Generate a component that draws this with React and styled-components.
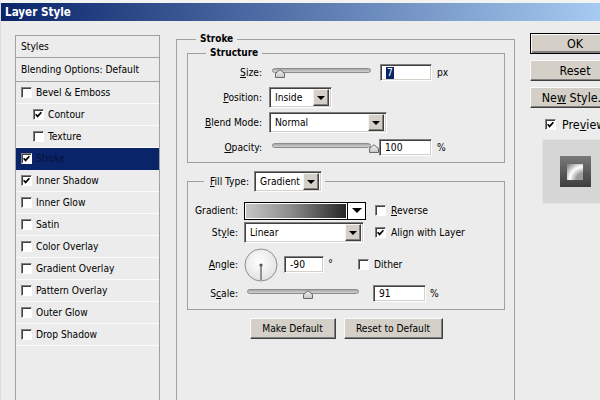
import React from "react";
import styled, { createGlobalStyle, css } from "styled-components";

const FONT = `"DejaVu Sans Condensed", "Liberation Sans", Arial, sans-serif`;

const Global = createGlobalStyle`
  html, body { margin: 0; padding: 0; background: #ececec; }
  body { font-family: ${FONT}; font-size: 10.2px; color: #000; }
  #root { width: 600px; height: 400px; overflow: hidden; }
`;

const Window = styled.div`
  width: 600px;
  height: 400px;
  overflow: hidden;
  box-sizing: border-box;
  background: #ececec;
  border-top: 3px solid #f3f3f3;
  border-left: 1px solid #dcdcdc;
  display: flex;
  flex-direction: column;
  font-family: ${FONT};
  font-size: 10.2px;
  color: #000;
`;

const TitleBar = styled.div`
  flex: none;
  height: 18px;
  display: flex;
  align-items: center;
  padding-left: 4px;
  background: linear-gradient(90deg, #0a246a 0%, #a6caf0 100%);
  color: #fff;
  font-weight: bold;
  font-size: 11.6px;
`;

const Body = styled.div`
  flex: 1;
  min-height: 0;
  display: flex;
  align-items: flex-start;
`;

/* ---------- left style list ---------- */
const StyleList = styled.div`
  flex: none;
  margin: 14px 0 0 14px;
  width: 145px;
  height: 400px;
  box-sizing: border-box;
  border: 1px solid #a0a0a0;
  display: flex;
  flex-direction: column;
`;

const ListHead = styled.div`
  height: ${(p) => p.$h}px;
  border-bottom: 1px solid #a0a0a0;
  display: flex;
  align-items: center;
  padding-left: 5px;
`;

const ListItem = styled.div`
  height: 21px;
  border-bottom: 1px solid ${(p) => (p.$selected ? "#0a246a" : "#fbfbfb")};
  display: flex;
  align-items: center;
  gap: 4px;
  padding-left: ${(p) => (p.$indent ? 17 : 5)}px;
  background: ${(p) => (p.$selected ? "#0a246a" : "transparent")};
  color: ${(p) => (p.$selected ? "#06103a" : "#000")};
`;

/* ---------- checkbox ---------- */
const Box = styled.span`
  flex: none;
  width: 11px;
  height: 11px;
  box-sizing: border-box;
  background: #fff;
  border: 1px solid;
  border-color: #808080 #fff #fff #808080;
  box-shadow: inset 1px 1px #404040;
  display: flex;
  align-items: center;
  justify-content: center;
`;

const CheckBox = ({ checked }) => (
  <Box>
    {checked && (
      <svg width="7" height="7" viewBox="0 0 7 7">
        <polyline points="0.6,3.2 2.6,5.4 6.4,1.2" fill="none" stroke="#000" strokeWidth="1.7" />
      </svg>
    )}
  </Box>
);

const CheckOption = styled.label`
  flex: none;
  display: flex;
  align-items: center;
  gap: 5px;
  margin-left: ${(p) => p.$ml || 0}px;
`;

const Mn = styled.span`
  text-decoration: underline;
  text-underline-offset: 1px;
`;

/* ---------- main group boxes ---------- */
const StrokeGroup = styled.fieldset`
  flex: none;
  margin: 11px 0 0 16px;
  padding: 0 9px 0 10px;
  width: 339px;
  height: 430px;
  box-sizing: border-box;
  border: 1px solid #a0a0a0;
  min-width: 0;
`;

const Group = styled.fieldset`
  margin: ${(p) => p.$mt || 0}px 0 0 0;
  padding: ${(p) => p.$pt}px 0 ${(p) => p.$pb}px 0;
  border: 1px solid #a0a0a0;
  min-width: 0;
  display: flex;
  flex-direction: column;
`;

const Legend = styled.legend`
  margin-left: ${(p) => p.$offset}px;
  padding: 0 4px;
  height: 14px;
  line-height: 14px;
  font-weight: bold;
  font-size: 10px;
`;

const ControlLegend = styled.legend`
  margin-left: 16px;
  padding: 0 3px 0 6px;
  height: 21px;
  display: flex;
  align-items: center;
  gap: 5px;
`;

const FormRow = styled.div`
  display: flex;
  align-items: center;
  height: ${(p) => p.$h || 21}px;
  margin-top: ${(p) => p.$mt || 0}px;
`;

const FieldLabel = styled.span`
  flex: none;
  width: ${(p) => p.$w}px;
  margin-right: ${(p) => p.$gap}px;
  text-align: right;
  white-space: nowrap;
`;

const Unit = styled.span`
  flex: none;
  margin-left: ${(p) => p.$ml || 5}px;
`;

const Degree = styled.span`
  flex: none;
  margin: 0 0 3px 4px;
  font-size: 11px;
  line-height: 11px;
`;

/* ---------- inputs ---------- */
const sunken = css`
  box-sizing: border-box;
  background: #fff;
  border: 1px solid;
  border-color: #808080 #fff #fff #808080;
  box-shadow: inset 1px 1px #404040, inset -1px -1px #d4d0c8;
`;

const TextInput = styled.div`
  ${sunken};
  flex: none;
  width: ${(p) => p.$w}px;
  height: 17px;
  margin-left: ${(p) => p.$ml || 0}px;
  padding-left: 5px;
  display: flex;
  align-items: center;
`;

const Highlight = styled.span`
  background: #0a246a;
  color: #fff;
  padding: 0 1px;
  line-height: 12px;
`;

const Select = styled.div`
  ${sunken};
  flex: none;
  width: ${(p) => p.$w}px;
  height: 21px;
  padding: 2px 2px 2px 5px;
  display: flex;
  align-items: center;
`;

const DropButton = styled.span`
  margin-left: auto;
  width: 16px;
  height: 17px;
  box-sizing: border-box;
  background: #d4d0c8;
  border: 1px solid;
  border-color: #f4f4f4 #404040 #404040 #f4f4f4;
  box-shadow: inset -1px -1px #808080;
  display: flex;
  align-items: center;
  justify-content: center;
  &::after {
    content: "";
    border-left: 4px solid transparent;
    border-right: 4px solid transparent;
    border-top: 4px solid #000;
  }
`;

const GradientPicker = styled.div`
  flex: none;
  width: 122px;
  height: 18px;
  box-sizing: border-box;
  border: 1px solid #000;
  background: #fff;
  display: flex;
`;

const GradientSwatch = styled.div`
  flex: 1;
  margin: 1px;
  background: linear-gradient(90deg, #c6c6c6 0%, #8c8c8c 45%, #262626 100%);
`;

const GradientArrow = styled.span`
  width: 17px;
  border-left: 1px solid #000;
  display: flex;
  align-items: center;
  justify-content: center;
  &::after {
    content: "";
    border-left: 5px solid transparent;
    border-right: 5px solid transparent;
    border-top: 5px solid #000;
  }
`;

/* ---------- slider ---------- */
const SliderBox = styled.div`
  flex: none;
  position: relative;
  width: ${(p) => p.$w}px;
  height: 21px;
  box-sizing: border-box;
  padding: 6px 3px 0;
`;

const SliderTrack = styled.div`
  height: 5px;
  box-sizing: border-box;
  border-radius: 3px;
  border: 1px solid #8c8c8c;
  background: linear-gradient(#a8a8a8, #d0d0d0);
`;

const Thumb = styled.svg`
  position: absolute;
  top: 7px;
`;

const Slider = ({ w, pos }) => {
  const left = 3 + pos * (w - 9);
  return (
    <SliderBox $w={w}>
      <SliderTrack />
      <Thumb width="12" height="9" viewBox="0 0 12 9" style={{ left }}>
        <defs>
          <linearGradient id="tg" x1="0" y1="0" x2="0" y2="1">
            <stop offset="0" stopColor="#f4f4f4" />
            <stop offset="1" stopColor="#c4c4c4" />
          </linearGradient>
        </defs>
        <path d="M1.5 8.5 L1.5 5 Q1.5 4 3 3.2 L6 0.8 L9 3.2 Q10.5 4 10.5 5 L10.5 8.5 Z" fill="url(#tg)" stroke="#6a6a6a" strokeWidth="1" />
      </Thumb>
    </SliderBox>
  );
};

const Dial = () => (
  <svg width="34" height="34" viewBox="0 0 34 34" style={{ flex: "none" }}>
    <defs>
      <radialGradient id="dg" cx="0.45" cy="0.4" r="0.6">
        <stop offset="0" stopColor="#ffffff" />
        <stop offset="1" stopColor="#e2e2e2" />
      </radialGradient>
    </defs>
    <circle cx="17" cy="17" r="16" fill="url(#dg)" stroke="#8e8e8e" strokeWidth="1" />
    <line x1="17" y1="17" x2="17" y2="32" stroke="#7a7a7a" strokeWidth="1.6" />
    <circle cx="17" cy="17" r="1.6" fill="#555" />
  </svg>
);

/* ---------- buttons ---------- */
const Button = styled.button`
  flex: none;
  width: ${(p) => p.$w}px;
  height: 21px;
  padding: 0;
  margin: 0;
  font-family: ${FONT};
  font-size: ${(p) => p.$fs || 10.2}px;
  color: #000;
  background: #d4d0c8;
  border: 1px solid;
  border-color: #fafafa #404040 #404040 #fafafa;
  box-shadow: inset -1px -1px #808080;
  white-space: nowrap;
  overflow: hidden;
  ${(p) =>
    p.$default &&
    css`
      border-color: #000;
      box-shadow: inset 1px 1px #fafafa, inset -2px -2px #808080;
    `}
`;

const ButtonRow = styled.div`
  display: flex;
  justify-content: center;
  gap: 8px;
  margin-top: 8px;
`;

/* ---------- right column ---------- */
const SideColumn = styled.div`
  flex: none;
  margin: 12px 0 0 15px;
  width: 90px;
  display: flex;
  flex-direction: column;
  gap: 6px;
  font-size: 12.4px;
`;

const PreviewToggle = styled(CheckOption)`
  margin: 4px 0 0 15px;
  gap: 6px;
  height: 12px;
`;

const PreviewBox = styled.div`
  margin: 3px 0 0 12px;
  width: 66px;
  height: 65px;
  box-sizing: border-box;
  background: #d6d6d6;
  border: 1px solid #e4e4e4;
  display: flex;
  align-items: center;
  justify-content: center;
`;

const PreviewOuter = styled.div`
  width: 31px;
  height: 31px;
  background: linear-gradient(#7a7a7a, #3c3c3c);
  display: flex;
  align-items: center;
  justify-content: center;
`;

const PreviewInner = styled.div`
  width: 16px;
  height: 16px;
  background: radial-gradient(circle at 100% 100%, #9c9c9c 0 30%, #dcdcdc 48%, #ffffff 58%, #8a8a8a 92%);
`;

const layers = [
  { label: "Bevel & Emboss" },
  { label: "Contour", indent: true, checked: true },
  { label: "Texture", indent: true },
  { label: "Stroke", checked: true, selected: true },
  { label: "Inner Shadow", checked: true },
  { label: "Inner Glow" },
  { label: "Satin" },
  { label: "Color Overlay" },
  { label: "Gradient Overlay" },
  { label: "Pattern Overlay" },
  { label: "Outer Glow" },
  { label: "Drop Shadow" },
];

export default function App() {
  return (
    <>
      <Global />
      <Window>
        <TitleBar>Layer Style</TitleBar>
        <Body>
          <StyleList>
            <ListHead $h={21}>Styles</ListHead>
            <ListHead $h={23}>Blending Options: Default</ListHead>
            {layers.map((l) => (
              <ListItem key={l.label} $indent={l.indent} $selected={l.selected}>
                <CheckBox checked={l.checked} />
                <span>{l.label}</span>
              </ListItem>
            ))}
          </StyleList>

          <StrokeGroup>
            <Legend $offset={9}>Stroke</Legend>
            <Group $pt={2} $pb={4}>
              <Legend $offset={18}>Structure</Legend>
              <FormRow>
                <FieldLabel $w={74} $gap={7}>
                  <Mn>S</Mn>ize:
                </FieldLabel>
                <Slider w={105} pos={0.02} />
                <TextInput $w={52} $ml={6}>
                  <Highlight>7</Highlight>
                </TextInput>
                <Unit>px</Unit>
              </FormRow>
              <FormRow $mt={4}>
                <FieldLabel $w={74} $gap={7}>
                  <Mn>P</Mn>osition:
                </FieldLabel>
                <Select $w={63}>
                  Inside
                  <DropButton />
                </Select>
              </FormRow>
              <FormRow $mt={4}>
                <FieldLabel $w={74} $gap={7}>
                  <Mn>B</Mn>lend Mode:
                </FieldLabel>
                <Select $w={118}>
                  Normal
                  <DropButton />
                </Select>
              </FormRow>
              <FormRow $mt={4}>
                <FieldLabel $w={74} $gap={7}>
                  <Mn>O</Mn>pacity:
                </FieldLabel>
                <Slider w={105} pos={1} />
                <TextInput $w={53} $ml={5}>100</TextInput>
                <Unit>%</Unit>
              </FormRow>
            </Group>

            <Group $mt={8} $pt={8} $pb={5}>
              <ControlLegend>
                <span>
                  <Mn>F</Mn>ill Type:
                </span>
                <Select $w={68}>
                  Gradient
                  <DropButton />
                </Select>
              </ControlLegend>
              <FormRow>
                <FieldLabel $w={50} $gap={6}>Gradient:</FieldLabel>
                <GradientPicker>
                  <GradientSwatch />
                  <GradientArrow />
                </GradientPicker>
                <CheckOption $ml={9}>
                  <CheckBox />
                  <span>
                    <Mn>R</Mn>everse
                  </span>
                </CheckOption>
              </FormRow>
              <FormRow $mt={1}>
                <FieldLabel $w={50} $gap={6}>
                  St<Mn>y</Mn>le:
                </FieldLabel>
                <Select $w={120}>
                  Linear
                  <DropButton />
                </Select>
                <CheckOption $ml={11}>
                  <CheckBox checked />
                  <span>
                    Ali<Mn>g</Mn>n with Layer
                  </span>
                </CheckOption>
              </FormRow>
              <FormRow $mt={5} $h={33}>
                <FieldLabel $w={50} $gap={6}>
                  <Mn>A</Mn>ngle:
                </FieldLabel>
                <Dial />
                <TextInput $w={40} $ml={6}>-90</TextInput>
                <Degree>°</Degree>
                <CheckOption $ml={25}>
                  <CheckBox />
                  <span>Dither</span>
                </CheckOption>
              </FormRow>
              <FormRow $mt={2}>
                <FieldLabel $w={50} $gap={6}>
                  S<Mn>c</Mn>ale:
                </FieldLabel>
                <Slider w={118} pos={0.5} />
                <TextInput $w={53} $ml={11}>91</TextInput>
                <Unit $ml={4}>%</Unit>
              </FormRow>
            </Group>

            <ButtonRow>
              <Button $w={86}>Make Default</Button>
              <Button $w={99}>Reset to Default</Button>
            </ButtonRow>
          </StrokeGroup>

          <SideColumn>
            <Button $w={90} $fs={12.4} $default>
              OK
            </Button>
            <Button $w={90} $fs={12.4}>
              Reset
            </Button>
            <Button $w={90} $fs={12.4}>
              Ne<Mn>w</Mn> Style...
            </Button>
            <PreviewToggle>
              <CheckBox checked />
              <span>
                Pre<Mn>v</Mn>iew
              </span>
            </PreviewToggle>
            <PreviewBox>
              <PreviewOuter>
                <PreviewInner />
              </PreviewOuter>
            </PreviewBox>
          </SideColumn>
        </Body>
      </Window>
    </>
  );
}
